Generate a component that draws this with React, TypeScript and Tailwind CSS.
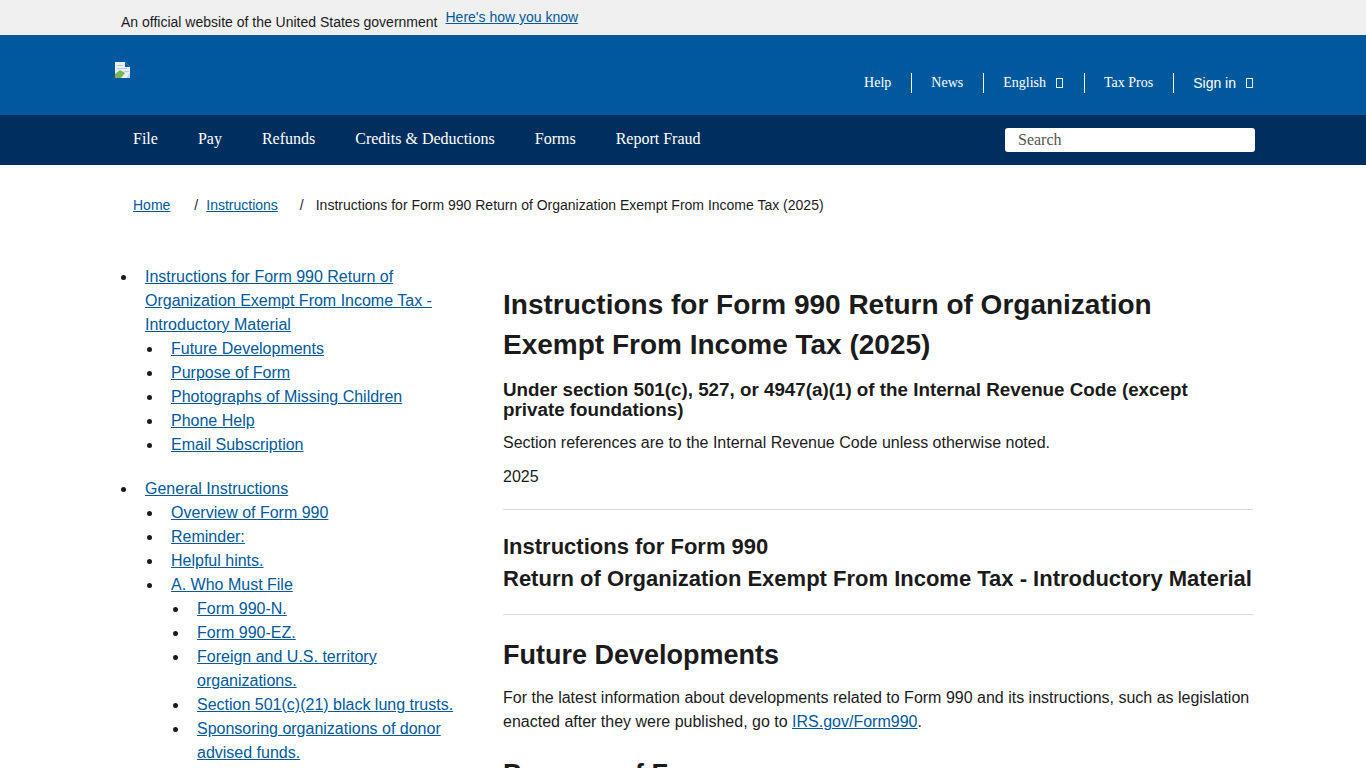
import React from 'react';

const sans = "font-['Liberation_Sans',Arial,sans-serif]";
const link = 'text-[#00599c] underline';

const mainNav = ['File', 'Pay', 'Refunds', 'Credits & Deductions', 'Forms', 'Report Fraud'];

function Tofu() {
  return <span className="ml-[10px] inline-block h-[10px] w-[7px] border border-white/90" />;
}

function BrokenImage() {
  return (
    <svg width="16" height="16" viewBox="0 0 16 16" className="block">
      <path d="M0 0h10l5 5v11H0z" fill="#e8eef4" />
      <path d="M10 0v5h5z" fill="#00599c" />
      <path d="M2 3h6v1H2zM2 6h10v1H2zM9 9h5v1H9z" fill="#b9cbdc" />
      <path d="M0 16v-4l5-4 5 3-4 5z" fill="#7fb05a" />
      <path d="M11 16l4-5v5z" fill="#bcd6ec" />
    </svg>
  );
}

function TopNavItem({ children, className }: { children: React.ReactNode; className: string }) {
  return <span className={`flex h-5 items-center text-white ${className}`}>{children}</span>;
}

function Header() {
  return (
    <header>
      <div className={`flex h-[35px] bg-[#f0f0f0] pl-[121px] text-sm text-[#1b1b1b] ${sans}`}>
        <span className="mt-[14px] leading-4">An official website of the United States government</span>
        <a className={`ml-2 mt-[9px] leading-4 ${link}`}>Here's how you know</a>
      </div>
      <div className="flex h-20 justify-between bg-[#00599c] pl-[115px] pr-[113px]">
        <div className="mt-[27px]">
          <BrokenImage />
        </div>
        <div className="mt-[38px] flex h-5 font-['Liberation_Serif',serif] text-sm">
          <TopNavItem className="border-r border-white px-5">Help</TopNavItem>
          <TopNavItem className="border-r border-white pl-[19px] pr-5">News</TopNavItem>
          <TopNavItem className="border-r border-white pl-[19px] pr-[21px]">
            English
            <Tofu />
          </TopNavItem>
          <TopNavItem className="border-r border-white pl-[19px] pr-5">Tax Pros</TopNavItem>
          <TopNavItem className="pl-[19px]">
            <span className={sans}>Sign in</span>
            <Tofu />
          </TopNavItem>
        </div>
      </div>
      <div className="flex h-[50px] items-center justify-between bg-[#002f5f] pl-[133px] pr-[111px] font-['Liberation_Serif',serif]">
        <nav className="flex gap-10 pb-[2px] text-white">
          {mainNav.map((item) => (
            <a key={item}>{item}</a>
          ))}
        </nav>
        <div className="flex h-6 w-[250px] items-center rounded-[3px] bg-white pl-[13px] text-[#555]">Search</div>
      </div>
    </header>
  );
}

function Breadcrumb() {
  return (
    <div className={`flex pl-[133px] pt-[32px] text-sm leading-4 text-[#1b1b1b] ${sans}`}>
      <a className={link}>Home</a>
      <span className="ml-6">/</span>
      <a className={`ml-2 ${link}`}>Instructions</a>
      <span className="ml-[22px]">/</span>
      <span className="ml-3">Instructions for Form 990 Return of Organization Exempt From Income Tax (2025)</span>
    </div>
  );
}

type TocItem = { label: string; children?: TocItem[] };

const toc: TocItem[] = [
  {
    label: 'Instructions for Form 990 Return of Organization Exempt From Income Tax - Introductory Material',
    children: [
      { label: 'Future Developments' },
      { label: 'Purpose of Form' },
      { label: 'Photographs of Missing Children' },
      { label: 'Phone Help' },
      { label: 'Email Subscription' },
    ],
  },
  {
    label: 'General Instructions',
    children: [
      { label: 'Overview of Form 990' },
      { label: 'Reminder:' },
      { label: 'Helpful hints.' },
      {
        label: 'A. Who Must File',
        children: [
          { label: 'Form 990-N.' },
          { label: 'Form 990-EZ.' },
          { label: 'Foreign and U.S. territory organizations.' },
          { label: 'Section 501(c)(21) black lung trusts.' },
          { label: 'Sponsoring organizations of donor advised funds.' },
        ],
      },
    ],
  },
];

// the bullets sit further from the text than list-disc puts them
function TocList({ items, top }: { items: TocItem[]; top?: boolean }) {
  return (
    <ul>
      {items.map((item) => (
        <li key={item.label} className={`flex ${top ? 'mb-5' : ''}`}>
          <span className={`flex shrink-0 justify-end pr-[19px] ${top ? 'w-[30px]' : 'w-[26px]'}`}>
            <span className="mt-[10px] h-[5px] w-[5px] rounded-full bg-[#1b1b1b]" />
          </span>
          <div className="min-w-0 flex-1">
            <a className={link}>{item.label}</a>
            {item.children && <TocList items={item.children} />}
          </div>
        </li>
      ))}
    </ul>
  );
}

export default function App() {
  return (
    <div className={`h-[768px] overflow-hidden bg-white text-[#1b1b1b] ${sans}`}>
      <Header />
      <Breadcrumb />
      <div className="flex pl-[115px] pr-[113px]">
        <aside className="mt-[52px] w-[344px] shrink-0 leading-6">
          <TocList items={toc} top />
        </aside>
        <main className="ml-[44px] mt-[72px] flex-1">
          <h1 className="text-[28px] font-bold leading-10">
            Instructions for Form 990 Return of Organization Exempt From Income Tax (2025)
          </h1>
          <h2 className="mt-[15px] text-[18.8px] font-bold leading-5">
            Under section 501(c), 527, or 4947(a)(1) of the Internal Revenue Code (except private foundations)
          </h2>
          <p className="mt-[11px] leading-6">Section references are to the Internal Revenue Code unless otherwise noted.</p>
          <p className="mt-[10px] leading-6">2025</p>
          <hr className="mt-[20px] border-[#d9d9d9]" />
          <h2 className="mt-[21px] text-[22px] font-bold leading-8">
            Instructions for Form 990
            <br />
            Return of Organization Exempt From Income Tax - Introductory Material
          </h2>
          <hr className="mt-[19px] border-[#d9d9d9]" />
          <h2 className="mt-5 text-[27px] font-bold leading-10">Future Developments</h2>
          <p className="mt-[11px] leading-6">
            For the latest information about developments related to Form 990 and its instructions, such as legislation
            enacted after they were published, go to <a className={link}>IRS.gov/Form990</a>.
          </p>
          <h2 className="mt-5 text-[27px] font-bold leading-10">Purpose of Form</h2>
        </main>
      </div>
    </div>
  );
}
